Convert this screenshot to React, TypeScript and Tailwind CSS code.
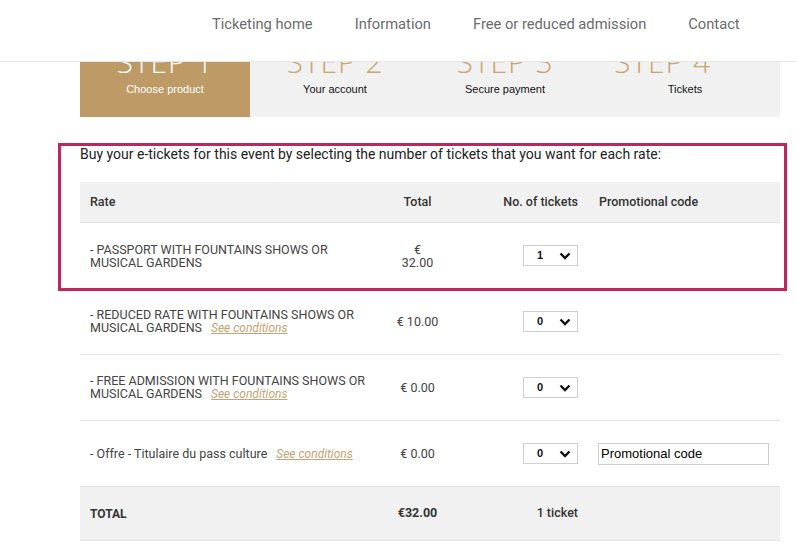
import React from "react";

type Rate = {
    label: React.ReactNode;
    price: React.ReactNode;
    qty: string;
    conditions?: boolean;
    promo?: boolean;
};

const rates: Rate[] = [
    { label: <>- PASSPORT WITH FOUNTAINS SHOWS OR<br />MUSICAL GARDENS</>, price: <>€<br />32.00</>, qty: "1" },
    { label: <>- REDUCED RATE WITH FOUNTAINS SHOWS OR<br />MUSICAL GARDENS</>, price: "€ 10.00", qty: "0", conditions: true },
    { label: <>- FREE ADMISSION WITH FOUNTAINS SHOWS OR<br />MUSICAL GARDENS</>, price: "€ 0.00", qty: "0", conditions: true },
    { label: "- Offre - Titulaire du pass culture", price: "€ 0.00", qty: "0", conditions: true, promo: true },
];

const steps = [
    { n: "STEP 1", label: "Choose product" },
    { n: "STEP 2", label: "Your account" },
    { n: "STEP 3", label: "Secure payment" },
    { n: "STEP 4", label: "Tickets" },
];

function QtySelect({ value }: { value: string }) {
    return (
        <div className="flex items-center justify-between w-[55px] h-[21px] border border-[#cfcfcf] bg-white pl-[13px] pr-[6px]">
            <span className="text-[11px] font-bold text-[#111]" style={{ fontFamily: "Arial, 'Liberation Sans', sans-serif" }}>{value}</span>
            <svg width="12" height="8" viewBox="0 0 12 8">
                <path d="M1.5 1.5 L6 6 L10.5 1.5" fill="none" stroke="#111" strokeWidth="2.4" />
            </svg>
        </div>
    );
}

export default function App() {
    return (
        <div className="relative w-[797px] h-[557px] overflow-hidden bg-white text-[#333]" style={{ fontFamily: "Roboto, 'Liberation Sans', sans-serif" }}>
            <header className="h-[62px] border-b border-[#e6e6e6] flex items-start pt-[14px] pl-[212px] gap-[42px] text-[14.7px] leading-[20px] text-[#6b6b6b]">
                <span>Ticketing home</span>
                <span>Information</span>
                <span>Free or reduced admission</span>
                <span>Contact</span>
            </header>

            <div className="ml-[80px] w-[700px] h-[55px] flex bg-[#f1f1f1]">
                {steps.map((s, i) => (
                    <div
                        key={s.n}
                        className={
                            "flex flex-col items-center overflow-hidden " +
                            (i === 0 ? "w-[170px] bg-[#bd9a66] text-white" : i === 3 ? "w-[190px] text-[#111]" : "w-[170px] text-[#111]")
                        }
                    >
                        <div
                            className={
                                "mt-[-15px] text-[30px] leading-none tracking-[1px] font-light " +
                                (i === 0 ? "text-white" : "text-[#c9a46d]") + (i === 3 ? " mr-[45px]" : "")
                            }
                            style={{ fontFamily: "'Open Sans', sans-serif" }}
                        >
                            {s.n}
                        </div>
                        <div className="mt-[6px] text-[11px] leading-[13px]" style={{ fontFamily: "Arial, 'Liberation Sans', sans-serif" }}>{s.label}</div>
                    </div>
                ))}
            </div>

            <main className="ml-[80px] w-[700px] pt-[29px]">
                <p className="text-[14px] leading-[17px] text-[#222]">
                    Buy your e-tickets for this event by selecting the number of tickets that you want for each rate:
                </p>

                <div className="mt-[19px] text-[12.5px]">
                    <div className="grid grid-cols-[300px_75px_134px_191px] h-[41px] items-center bg-[#f1f1f1] border-b border-[#e4e4e4] font-medium text-[#333]">
                        <div className="pl-[10px]">Rate</div>
                        <div className="text-center">Total</div>
                        <div className="text-right pr-[11px]">No. of tickets</div>
                        <div className="pl-[10px]">Promotional code</div>
                    </div>

                    {rates.map((r, i) => (
                        <div key={i} className="grid grid-cols-[300px_75px_134px_191px] h-[66px] items-center border-b border-[#e4e4e4] text-[#444] leading-[13px]">
                            <div className="pl-[10px]">
                                {r.label}
                                {r.conditions && (
                                    <a href="#" className="ml-[9px] text-[12px] italic underline text-[#c3a473]">See conditions</a>
                                )}
                            </div>
                            <div className="text-center">{r.price}</div>
                            <div className="flex justify-end pr-[11px]">
                                <QtySelect value={r.qty} />
                            </div>
                            <div className="pl-[9px]">
                                {r.promo && (
                                    <input
                                        readOnly
                                        value="Promotional code"
                                        className="w-[171px] h-[22px] border border-[#cfcfcf] px-[2px] text-[13px] text-black outline-none"
                                        style={{ fontFamily: "Arial, 'Liberation Sans', sans-serif" }}
                                    />
                                )}
                            </div>
                        </div>
                    ))}

                    <div className="grid grid-cols-[300px_75px_134px_191px] h-[54px] items-center bg-[#f1f1f1] border-b border-[#e4e4e4] font-bold text-[#333]">
                        <div className="pl-[10px] text-[12px]">TOTAL</div>
                        <div className="text-center">€32.00</div>
                        <div className="text-right pr-[11px] font-medium">1 ticket</div>
                        <div />
                    </div>
                </div>
            </main>

            <div className="absolute left-[58px] top-[143px] w-[729px] h-[148px] border-[3px] border-[#c1255d] pointer-events-none" />
        </div>
    );
}
